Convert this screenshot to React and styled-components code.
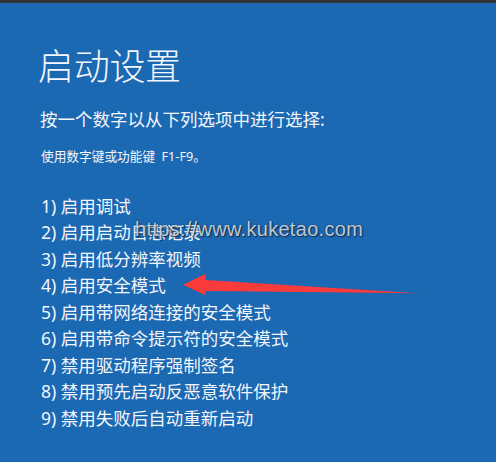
import React from "react";
import styled, { createGlobalStyle } from "styled-components";

const Global = createGlobalStyle`
  html, body { margin: 0; padding: 0; background: #1b68b3; }
  body { width: 496px; height: 462px; overflow: hidden; }
`;

const Screen = styled.div`
  position: relative;
  width: 496px;
  height: 462px;
  background: #1b68b3;
  font-family: "Noto Sans", "Noto Sans CJK SC", sans-serif;
  color: #f3f6fb;
  overflow: hidden;
`;

const TopStrip = styled.div`
  height: 3px;
  background: #333333;
`;

const Content = styled.div`
  display: flex;
  flex-direction: column;
  padding: 41.5px 0 0 38px;
`;

const Title = styled.h1`
  margin: 0;
  font-size: 36px;
  line-height: 44px;
  font-weight: 300;
  letter-spacing: -0.3px;
`;

const Subtitle = styled.p`
  margin: 18px 0 0 2px;
  font-size: 17.5px;
  line-height: 24px;
  font-weight: 400;
`;

const Hint = styled.p`
  margin: 16px 0 0 3px;
  font-size: 12.7px;
  line-height: 18px;
  word-spacing: 3px;
`;

const OptionList = styled.ol`
  list-style: none;
  margin: 28px 0 0 3px;
  padding: 0;
  display: flex;
  flex-direction: column;
`;

const Option = styled.li`
  font-size: 17.5px;
  line-height: 26.5px;
  white-space: nowrap;
`;

const Watermark = styled.div`
  position: absolute;
  left: 135px;
  top: 217px;
  font-family: "Liberation Sans", Arial, sans-serif;
  font-size: 20px;
  line-height: 24px;
  letter-spacing: 0.3px;
  color: rgba(235, 240, 246, 0.8);
  text-shadow: 1px 1px 1px rgba(20, 30, 45, 0.8), 0 0 2px rgba(20, 30, 45, 0.55);
  pointer-events: none;
`;

const Arrow = styled.svg`
  position: absolute;
  left: 0;
  top: 0;
  pointer-events: none;
`;

const options = [
  "1) 启用调试",
  "2) 启用启动日志记录",
  "3) 启用低分辨率视频",
  "4) 启用安全模式",
  "5) 启用带网络连接的安全模式",
  "6) 启用带命令提示符的安全模式",
  "7) 禁用驱动程序强制签名",
  "8) 禁用预先启动反恶意软件保护",
  "9) 禁用失败后自动重新启动",
];

export default function App() {
  return (
    <Screen>
      <Global />
      <TopStrip />
      <Content>
        <Title>启动设置</Title>
        <Subtitle>按一个数字以从下列选项中进行选择:</Subtitle>
        <Hint>使用数字键或功能键 F1-F9。</Hint>
        <OptionList>
          {options.map((o) => (
            <Option key={o}>{o}</Option>
          ))}
        </OptionList>
      </Content>
      <Watermark>https://www.kuketao.com</Watermark>
      <Arrow width="496" height="462" viewBox="0 0 496 462">
        <path
          d="M183 284.7 L205 274 L206 280 L418 293.3 L206 291 L205 295 Z"
          fill="#f93b3b"
        />
      </Arrow>
    </Screen>
  );
}
